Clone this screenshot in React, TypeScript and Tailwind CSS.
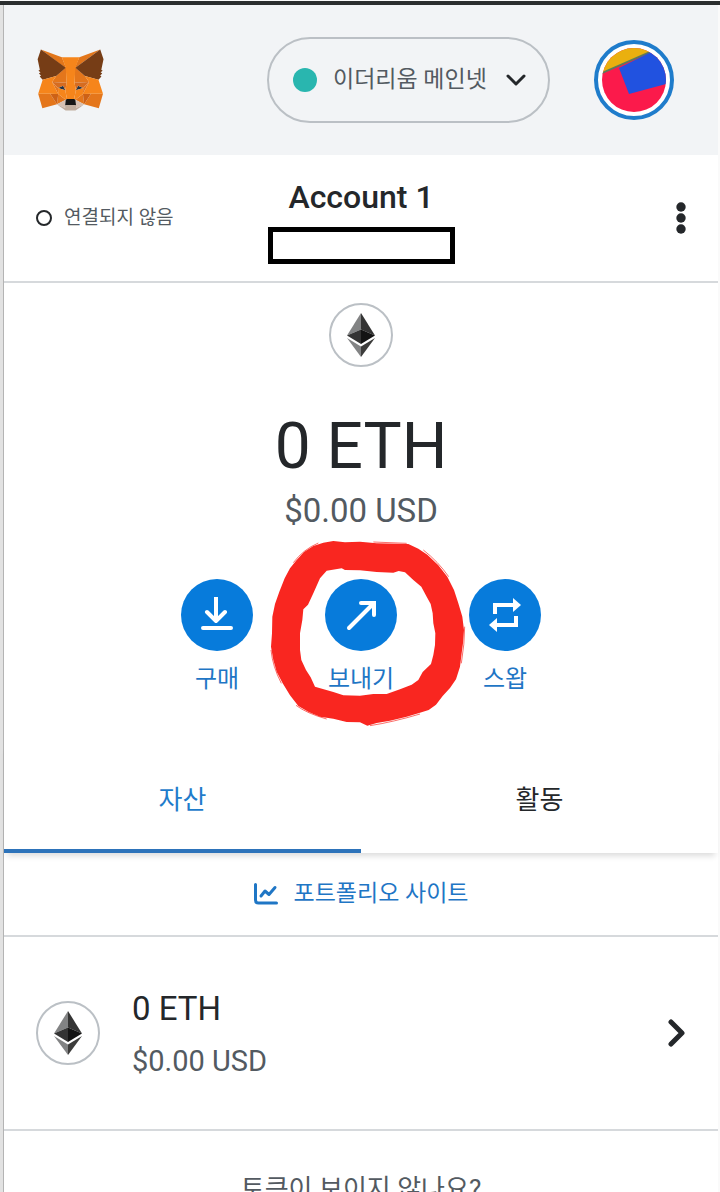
import type { ReactNode } from 'react';

type Shape = { fill: string; points: string };

const foxShapes: Shape[] = [
  { fill: '#E2761B', points: '274.1,35.5 174.6,109.4 193,65.8' },
  { fill: '#E2761B', points: '44.4,35.5 143.1,110.1 125.6,65.8' },
  { fill: '#E4761B', points: '238.3,206.8 211.8,247.4 268.5,263 284.8,207.7' },
  { fill: '#E4761B', points: '33.9,207.7 50.1,263 106.8,247.4 80.3,206.8' },
  { fill: '#E4761B', points: '103.6,138.2 87.8,162.1 144.1,164.6 142.1,104.1' },
  { fill: '#E4761B', points: '214.9,138.2 175.9,103.4 174.6,164.6 230.8,162.1' },
  { fill: '#E4761B', points: '106.8,247.4 140.6,230.9 111.4,208.1' },
  { fill: '#E4761B', points: '177.9,230.9 211.8,247.4 207.1,208.1' },
  { fill: '#D7C1B3', points: '211.8,247.4 177.9,230.9 180.6,253 180.3,262.3' },
  { fill: '#D7C1B3', points: '106.8,247.4 138.3,262.3 138.1,253 140.6,230.9' },
  { fill: '#233447', points: '138.8,193.5 110.6,185.2 130.5,176.1' },
  { fill: '#233447', points: '179.7,193.5 188,176.1 208,185.2' },
  { fill: '#CD6116', points: '106.8,247.4 111.6,206.8 80.3,207.7' },
  { fill: '#CD6116', points: '207,206.8 211.8,247.4 238.3,207.7' },
  { fill: '#D66C20', points: '230.8,162.1 174.6,164.6 179.8,193.5 188.1,176.1 208.1,185.2' },
  { fill: '#D66C20', points: '110.6,185.2 130.6,176.1 138.8,193.5 144.1,164.6 87.8,162.1' },
  { fill: '#E4751F', points: '87.8,162.1 111.4,208.1 110.6,185.2' },
  { fill: '#E4751F', points: '208.1,185.2 207.1,208.1 230.8,162.1' },
  { fill: '#F6851B', points: '179.8,193.5 173.1,227.6 177.9,230.9 207.1,208.1 208.1,185.2' },
  { fill: '#F6851B', points: '110.6,185.2 111.4,208.1 140.6,230.9 145.4,227.6 138.8,193.5' },
  {
    fill: '#C0AD9E',
    points:
      '180.3,262.3 180.6,253 178.1,250.8 140.4,250.8 138.1,253 138.3,262.3 106.8,247.4 117.8,256.4 140.1,271.9 178.4,271.9 200.8,256.4 211.8,247.4',
  },
  {
    fill: '#161616',
    points: '177.9,230.9 173.1,227.6 145.4,227.6 140.6,230.9 138.1,253 140.4,250.8 178.1,250.8 180.6,253',
  },
  {
    fill: '#763D16',
    points:
      '278.3,114.2 286.8,73.4 274.1,35.5 177.9,106.9 214.9,138.2 267.2,153.5 278.8,140 273.8,136.4 281.8,129.1 275.6,124.3 283.6,118.2',
  },
  {
    fill: '#763D16',
    points:
      '31.8,73.4 40.3,114.2 34.9,118.2 42.9,124.3 36.8,129.1 44.8,136.4 39.8,140 51.3,153.5 103.6,138.2 140.6,106.9 44.4,35.5',
  },
  { fill: '#F6851B', points: '267.2,153.5 214.9,138.2 230.8,162.1 207.1,208.1 238.3,207.7 284.8,207.7' },
  { fill: '#F6851B', points: '103.6,138.2 51.3,153.5 33.9,207.7 80.3,207.7 111.4,208.1 87.8,162.1' },
  {
    fill: '#F6851B',
    points:
      '174.6,164.6 177.9,106.9 193.1,65.8 125.6,65.8 140.6,106.9 144.1,164.6 138.8,193.5 145.4,227.6 173.1,227.6 179.8,193.5',
  },
];

function FoxLogo() {
  return (
    <svg viewBox="30 34 258 240" className="h-[62px] w-[67px]" role="img" aria-label="MetaMask">
      {foxShapes.map((s) => (
        <polygon key={s.points} fill={s.fill} points={s.points} />
      ))}
    </svg>
  );
}

function Avatar() {
  return (
    <svg viewBox="0 0 64 64" className="size-16 rounded-full" aria-hidden="true">
      <rect width="64" height="64" fill="#fb1a4b" />
      <path d="M0 0H64V-2L48 4L0 25Z" fill="#eab00f" />
      <path d="M0 24L48 3V5L0 26Z" fill="#5b7a5c" />
      <path d="M17 20L49 4L64 0V36L27 46Z" fill="#2152e0" />
    </svg>
  );
}

function EthIcon() {
  return (
    <span className="flex size-16 shrink-0 items-center justify-center rounded-full border-2 border-[#bbc0c5] bg-white">
      <svg viewBox="0 0 28 44" className="h-11 w-7" aria-hidden="true">
        <path d="M14 0L0 22.5L14 16.5Z" fill="#828384" />
        <path d="M14 0V16.5L28 22.5Z" fill="#343434" />
        <path d="M0 22.5L14 16.5V31Z" fill="#343434" />
        <path d="M28 22.5L14 16.5V31Z" fill="#141414" />
        <path d="M0 25L14 33.5V44Z" fill="#828384" />
        <path d="M28 25L14 33.5V44Z" fill="#3c3c3b" />
      </svg>
    </span>
  );
}

// Hand drawn marker ring around the send button
function MarkerRing() {
  return (
    <svg
      viewBox="324 414 600 570"
      className="pointer-events-none absolute -top-[41px] left-1/2 -ml-[93px] h-[190px] w-[200px] max-w-none"
      aria-hidden="true"
    >
      <path
        fill="#f92620"
        fillRule="evenodd"
        d="M460 438L490 428L520 423L555 427L600 425L650 430L745 432L775 446L802 464L835 496L862 530L882 570L895 610L907 650L912 690L909 730L905 760L900 800L888 838L870 864L848 888L828 914L806 930L775 940L740 950L690 962L650 969L622 977L600 967L560 966L520 956L480 950L446 936L415 918L390 886L368 850L350 815L340 780L333 740L336 700L337 650L345 612L358 575L374 535L390 505L410 480L432 456Z
           M500 512L545 505L555 510L600 511L650 516L700 518L716 513L735 517L760 540L784 560L800 590L812 612L818 640L820 670L826 700L825 735L820 765L813 792L788 816L775 840L755 854L720 868L680 882L640 882L600 887L550 886L520 876L465 860L452 832L438 810L424 780L420 750L420 700L427 660L430 628L444 614L460 580L480 535Z"
      />
      <g fill="none" stroke="#f92620" strokeWidth="2">
        <path d="M400 488Q430 448 475 429M640 426L740 430M790 450Q835 485 866 530M914 680Q914 730 904 790M333 750Q338 800 364 850M408 916Q440 940 500 957M630 977Q700 966 780 942" />
      </g>
    </svg>
  );
}

type ActionProps = { label: string; icon: ReactNode; marked?: boolean };

function Action({ label, icon, marked }: ActionProps) {
  return (
    <button className="relative flex w-[72px] flex-col items-center gap-2 text-2xl leading-10 text-[#1f76c5]">
      {marked && <MarkerRing />}
      <span className="relative flex size-[72px] items-center justify-center rounded-full bg-[#077bdb]">{icon}</span>
      <span className="relative whitespace-nowrap">{label}</span>
    </button>
  );
}

const buyIcon = (
  <svg viewBox="0 0 36 36" className="size-9" fill="none" stroke="#fff" strokeWidth="4" strokeLinecap="round" strokeLinejoin="round">
    <path d="M17 0V24M8 15L17 24L26 15M4 31H32" />
  </svg>
);

const sendIcon = (
  <svg viewBox="0 0 36 36" className="size-9" fill="none" stroke="#fff" strokeWidth="4" strokeLinecap="round">
    <path d="M6 31L30 7" />
    <path d="M18 6H31V18" strokeLinejoin="miter" />
  </svg>
);

const swapIcon = (
  <svg viewBox="0 0 36 36" className="size-9">
    <path d="M8 17V8H27" fill="none" stroke="#fff" strokeWidth="4" />
    <path d="M26 1L34 8L26 15Z" fill="#fff" />
    <path d="M29 19V28H10" fill="none" stroke="#fff" strokeWidth="4" />
    <path d="M10 21L2 28L10 35Z" fill="#fff" />
  </svg>
);

export default function App() {
  return (
    <div className="flex h-screen flex-col overflow-hidden bg-[#fafafa] font-[Roboto,'Noto_Sans_CJK_KR',sans-serif] text-[#24272a]">
      <div className="mt-px h-1 shrink-0 bg-[#2b2e2f]" />

      <div className="mr-0.5 flex-1 border-l-3 border-[#e2e2e2]">
        <div className="h-full border-l border-[#b4b4b4] bg-white">
          <header className="flex h-[150px] items-center bg-[#f2f4f6] pr-11 pl-[33px]">
            <FoxLogo />
            <button className="mr-11 ml-auto flex h-[86px] w-[283px] items-center rounded-full border-2 border-[#bbc0c5] pr-[22px] pl-6 text-[23px] text-[#535a61]">
              <span className="mr-4 size-6 rounded-full bg-[#29b6af]" />
              <span className="whitespace-nowrap">이더리움 메인넷</span>
              <svg viewBox="0 0 20 12" className="ml-auto h-3 w-5" fill="none" stroke="#24272a" strokeWidth="3" strokeLinecap="round" strokeLinejoin="round">
                <path d="M2 2L10 10L18 2" />
              </svg>
            </button>
            <button aria-label="내 계정" className="rounded-full border-4 border-[#1f7ccb] bg-white p-1">
              <Avatar />
            </button>
          </header>

          <section className="grid h-32 grid-cols-[1fr_auto_1fr] items-center border-b-2 border-[#d6d9dc] px-8">
            <div className="flex items-center gap-3 text-[19px] text-[#535a61]">
              <span className="size-4 rounded-full border-2 border-[#24272a]" />
              연결되지 않음
            </div>
            <div className="flex flex-col items-center gap-2.5 pt-1">
              <h1 className="text-[32px] leading-10 font-medium">Account 1</h1>
              <div className="h-[37px] w-[187px] border-[5px] border-black bg-white" />
            </div>
            <button aria-label="계정 옵션" className="justify-self-end">
              <svg viewBox="0 0 10 32" className="h-8 w-[10px]" fill="#24272a">
                <circle cx="5" cy="5" r="4.7" />
                <circle cx="5" cy="16" r="4.7" />
                <circle cx="5" cy="27" r="4.7" />
              </svg>
            </button>
          </section>

          <section className="flex flex-col items-center pt-5">
            <EthIcon />
            <p className="mt-[42px] text-[64px] leading-[76px]">0 ETH</p>
            <p className="mt-1.5 text-[33px] leading-10 text-[#535a61]">$0.00 USD</p>
            <div className="mt-12 flex gap-[72px]">
              <Action label="구매" icon={buyIcon} />
              <Action label="보내기" icon={sendIcon} marked />
              <Action label="스왑" icon={swapIcon} />
            </div>
          </section>

          <nav className="mt-11 flex h-[110px] text-[26px] shadow-[0_6px_6px_-3px_rgba(0,0,0,0.14)]">
            <button className="flex-1 border-b-4 border-[#2d73ba] pt-2 text-[#1f7ccb]">자산</button>
            <button className="flex-1 border-b-4 border-transparent pt-2">활동</button>
          </nav>

          <div className="flex h-[84px] items-center justify-center border-b-2 border-[#d6d9dc]">
            <a href="#portfolio" className="flex items-center gap-4 text-[23px] text-[#1f76c5]">
              <svg viewBox="0 0 24 22" className="h-[22px] w-6" fill="none" stroke="currentColor" strokeWidth="3" strokeLinecap="round" strokeLinejoin="round">
                <path d="M1.5 1.5V17Q1.5 20 4.5 20H22.5" />
                <path d="M7 13L11 8L15 11.5L21 4.5" />
              </svg>
              포트폴리오 사이트
            </a>
          </div>

          <button className="flex h-[194px] w-full items-center border-b-2 border-[#d6d9dc] px-8 text-left">
            <EthIcon />
            <span className="ml-8 flex flex-col gap-3 pt-1">
              <span className="text-[33px] leading-10">0 ETH</span>
              <span className="text-[29px] leading-10 text-[#535a61]">$0.00 USD</span>
            </span>
            <svg viewBox="0 0 18 28" className="ml-auto h-7 w-[18px]" fill="none" stroke="#24272a" strokeWidth="5" strokeLinecap="round" strokeLinejoin="round">
              <path d="M3 3L14 14L3 25" />
            </svg>
          </button>

          <p className="pt-[38px] text-center text-[26px] leading-10 text-[#535a61]">토큰이 보이지 않나요?</p>
        </div>
      </div>
    </div>
  );
}
